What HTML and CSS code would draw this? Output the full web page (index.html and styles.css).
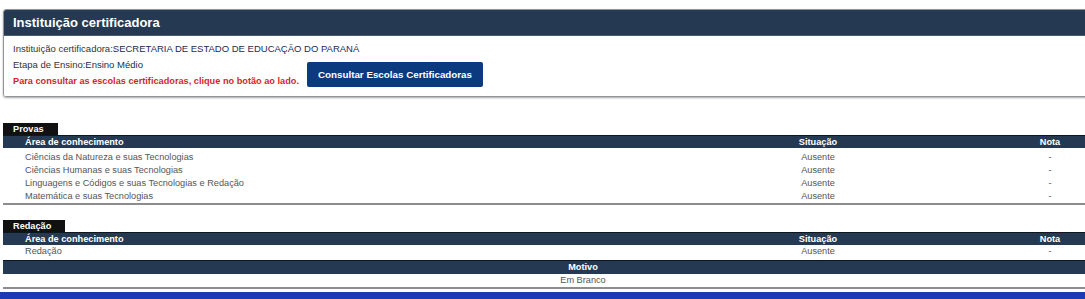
FILE: index.html
```html
<!DOCTYPE html>
<html lang="pt-BR">
<head>
<meta charset="utf-8">
<title>Instituição certificadora</title>
<link rel="stylesheet" href="styles.css">
</head>
<body>
<div class="page">
  <div class="panel">
    <div class="panel-head">Instituição certificadora</div>
    <div class="panel-body">
      <p class="line"><span class="lbl">Instituição certificadora:</span><span class="val">SECRETARIA DE ESTADO DE EDUCAÇÃO DO PARANÁ</span></p>
      <div class="line-group">
        <div class="lines">
          <p class="line"><span class="lbl">Etapa de Ensino:</span><span class="val">Ensino Médio</span></p>
          <p class="line warn">Para consultar as escolas certificadoras, clique no botão ao lado.</p>
        </div>
        <button class="btn" type="button">Consultar Escolas Certificadoras</button>
      </div>
    </div>
  </div>

  <section class="grade provas">
    <div class="tab">Provas</div>
    <div class="grid head"><span class="c1">Área de conhecimento</span><span class="c2">Situação</span><span class="c3">Nota</span></div>
    <div class="rows">
      <div class="grid row"><span class="c1">Ciências da Natureza e suas Tecnologias</span><span class="c2">Ausente</span><span class="c3">-</span></div>
      <div class="grid row"><span class="c1">Ciências Humanas e suas Tecnologias</span><span class="c2">Ausente</span><span class="c3">-</span></div>
      <div class="grid row"><span class="c1">Linguagens e Códigos e suas Tecnologias e Redação</span><span class="c2">Ausente</span><span class="c3">-</span></div>
      <div class="grid row"><span class="c1">Matemática e suas Tecnologias</span><span class="c2">Ausente</span><span class="c3">-</span></div>
    </div>
  </section>

  <section class="grade redacao">
    <div class="tab">Redação</div>
    <div class="grid head"><span class="c1">Área de conhecimento</span><span class="c2">Situação</span><span class="c3">Nota</span></div>
    <div class="grid row"><span class="c1">Redação</span><span class="c2">Ausente</span><span class="c3">-</span></div>
    <div class="motivo">
      <div class="head center">Motivo</div>
      <div class="row center">Em Branco</div>
    </div>
  </section>

  <div class="band"></div>
</div>
</body>
</html>
```

FILE: styles.css
```css
html, body {
  margin: 0;
  padding: 0;
  overflow: hidden;
  background: #fff;
}
.page {
  font-family: "Liberation Sans", Arial, sans-serif;
  font-size: 9.2px;
  color: #555;
  padding: 9px 0 0 3px;
}
p { margin: 0; }

.panel {
  margin-right: -12px;
  border: 1px solid #8f9499;
  border-radius: 3px;
  box-shadow: 0 1px 2px rgba(0,0,0,0.35);
  overflow: hidden;
}
.panel-head {
  background: #253a52;
  color: #fff;
  font-weight: bold;
  font-size: 13px;
  height: 25px;
  line-height: 25px;
  padding-left: 9px;
  border-bottom: 1px solid #4a5a6a;
}
.panel-body {
  background: #fff;
  padding: 5px 9px 7px;
}
.line {
  font-size: 9.5px;
  line-height: 16px;
  color: #333;
}
.lbl { color: #333; }
.val { color: #1a2b5a; }
.line-group {
  display: flex;
  align-items: center;
  gap: 8px;
}
.warn {
  color: #d41f2c;
  font-weight: bold;
  font-size: 9.2px;
}
.btn {
  background: #0c3a7e;
  color: #fff;
  border: 0;
  border-radius: 2px;
  font-family: "Liberation Sans", Arial, sans-serif;
  font-weight: bold;
  font-size: 9.8px;
  height: 25px;
  padding: 0 11px;
  margin-top: 3px;
}

.grade { margin-top: 26px; }
.grade.redacao { margin-top: 15px; }
.tab {
  display: inline-block;
  background: #111;
  color: #fff;
  font-weight: bold;
  line-height: 12px;
  padding: 0 14px 0 10px;
}
.grid {
  display: grid;
  grid-template-columns: 1fr 394px 70px;
}
.c1 { padding-left: 22px; }
.c2, .c3 { text-align: center; }
.head {
  background: #253a52;
  color: #fff;
  font-weight: bold;
  line-height: 12px;
  border-top: 1px solid #0e1620;
}
.row {
  line-height: 13px;
  color: #555;
}
.provas .rows {
  padding-top: 3px;
  border-bottom: 2px solid #8d8d8d;
}
.motivo {
  margin-top: 2px;
  margin-right: -78px;
  border-bottom: 2px solid #8d8d8d;
}
.motivo .head { line-height: 13px; border-top: 1px solid #0e1620; }
.center { text-align: center; }

.band {
  margin-left: -3px;
  margin-top: 3px;
  height: 12px;
  background: #1a3bb3;
}
```
